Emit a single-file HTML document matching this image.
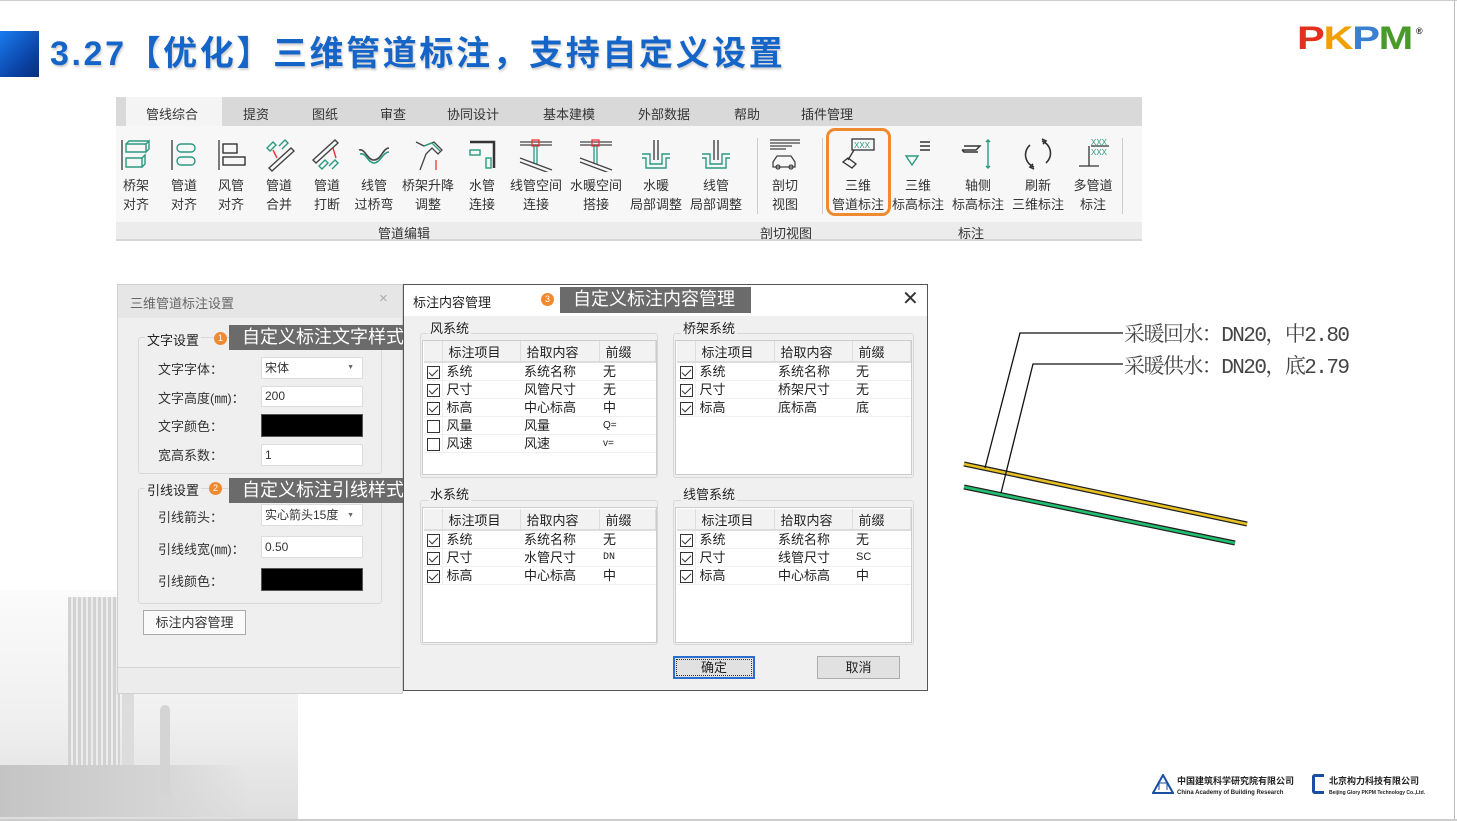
<!DOCTYPE html>
<html><head><meta charset="utf-8"><style>
*{margin:0;padding:0;box-sizing:border-box}
body{width:1457px;height:821px;background:#fff;position:relative;overflow:hidden;font-family:"Liberation Sans","Noto Sans CJK SC",sans-serif;color:#222}
.a{position:absolute}
.t{font-size:13px;white-space:nowrap}
.tab{position:absolute;top:104px;font-size:13px;color:#333}
.btn{position:absolute;top:136px;width:60px;margin-left:-30px;text-align:center;font-size:13px;line-height:19px;color:#333}
.btn svg{display:block;margin:0 auto 4px;width:36px;height:36px}
.sep{position:absolute;top:138px;width:1px;height:76px;background:#ccc}
.lab{position:absolute;font-size:13px;color:#333}
.inp{position:absolute;left:261px;width:102px;background:#fff;border:1px solid #ddd;font-size:12px;padding-left:3px;color:#333}
.blk{position:absolute;left:261px;width:102px;background:#000;border:1px solid #555}
.dark{position:absolute;background:#6b6b6b;color:#fff;font-size:18px;padding-left:13px;line-height:25px;white-space:nowrap}
.circ{position:absolute;width:13px;height:13px;border-radius:50%;background:#f08a30;color:#fff;font-size:9px;text-align:center;line-height:13px}
.gb{position:absolute;border:1px solid #d8d8d8;border-radius:3px}
.gl{position:absolute;font-size:13px;background:#f0f0f0;padding:0 2px}
table{position:absolute;border-collapse:collapse;background:#fff;font-size:13px;table-layout:fixed}
td{height:18px;border-bottom:1px solid #f0f0f0;padding:0 0 0 4px;white-space:nowrap;line-height:17px}
th{height:21px;background:#f2f2f2;border-bottom:2px solid #ddd;border-right:1px solid #ddd;font-weight:normal;text-align:left;padding-left:6px;font-size:13px}
td.c{padding:0 0 0 3px;border-right:1px solid #eee}
.cb{display:inline-block;width:13px;height:13px;border:1px solid #333;vertical-align:middle;position:relative}
.cb.k::after{content:"";position:absolute;left:3px;top:0px;width:4px;height:8px;border:solid #333;border-width:0 1.5px 1.5px 0;transform:rotate(45deg)}
.tw{position:absolute;border:1px solid #ccc;background:#fff}
</style></head><body>
<div class="a" style="left:0;top:0;width:1457px;height:1px;background:#ccc"></div>
<div class="a" style="left:1454px;top:0;width:1px;height:821px;background:#bbb"></div>
<div class="a" style="left:0;top:819px;width:1457px;height:2px;background:#ccc"></div>

<!-- building bg -->
<div class="a" style="left:0;top:590px;width:298px;height:229px;background:linear-gradient(180deg,#fbfbfb,#f0f0f0 55%,#dedede)"></div>
<div class="a" style="left:68px;top:597px;width:52px;height:190px;background:repeating-linear-gradient(90deg,#d2d2d2 0 3px,#ececec 3px 5px)"></div>
<div class="a" style="left:122px;top:690px;width:12px;height:100px;background:#dcdcdc"></div>
<div class="a" style="left:160px;top:705px;width:10px;height:90px;background:#d4d4d4;border-radius:5px 5px 0 0"></div>
<div class="a" style="left:0;top:765px;width:250px;height:52px;background:linear-gradient(90deg,#c4c4c4,#d4d4d4 60%,rgba(240,240,240,0))"></div>

<!-- title -->
<div class="a" style="left:0;top:31px;width:39px;height:46px;background:linear-gradient(135deg,#1a7cf0,#0a3fa0 70%,#082f7a)"></div>
<div class="a" style="left:50px;top:31px;font-size:34px;font-weight:bold;color:#1565c8;white-space:nowrap;line-height:46px;letter-spacing:2.6px;text-shadow:1px 2px 2px rgba(0,0,0,.2)">3.27【优化】三维管道标注，支持自定义设置</div>

<!-- PKPM -->
<div class="a" style="left:1297px;top:22px;font-size:32px;font-weight:900;letter-spacing:-1px;line-height:32px;transform:scaleX(1.3);transform-origin:left top">
<span style="color:#e0301e">P</span><span style="color:#f0a000">K</span><span style="color:#3b7fd0">P</span><span style="color:#4a9a2a">M</span></div>
<div class="a" style="left:1416px;top:26px;font-size:9px;font-weight:bold">®</div>

<!-- ribbon -->
<div class="a" style="left:116px;top:97px;width:1026px;height:29px;background:#d9d9d9"></div>
<div class="a" style="left:126px;top:97px;width:96px;height:29px;background:#f4f4f4"></div>
<div class="tab" style="left:146px">管线综合</div>
<div class="tab" style="left:243px">提资</div>
<div class="tab" style="left:312px">图纸</div>
<div class="tab" style="left:380px">审查</div>
<div class="tab" style="left:447px">协同设计</div>
<div class="tab" style="left:543px">基本建模</div>
<div class="tab" style="left:638px">外部数据</div>
<div class="tab" style="left:734px">帮助</div>
<div class="tab" style="left:801px">插件管理</div>
<div class="a" style="left:116px;top:126px;width:1026px;height:96px;background:#f7f7f7"></div>
<div class="a" style="left:116px;top:222px;width:1026px;height:19px;background:#ececec;border-bottom:2px solid #d6d6d6"></div>
<div class="lab" style="left:378px;top:223px">管道编辑</div>
<div class="lab" style="left:760px;top:223px">剖切视图</div>
<div class="lab" style="left:958px;top:223px">标注</div>
<div class="sep" style="left:757px"></div><div class="sep" style="left:822px"></div><div class="sep" style="left:1122px"></div>

<div class="btn" style="left:136px"><svg viewBox="0 0 36 36" fill="none" stroke-width="1.4"><path d="M4 4v30" stroke="#444"/><path d="M8 8h20v8H8zM28 8l3-3v8l-3 3M8 8l3-3h20" stroke="#2a9a80"/><path d="M8 22h16v9H8zM24 22l3-3v9l-3 3" stroke="#2a9a80"/></svg>桥架<br>对齐</div>
<div class="btn" style="left:184px"><svg viewBox="0 0 36 36" fill="none" stroke-width="1.4"><path d="M6 4v30" stroke="#444"/><rect x="11" y="8" width="18" height="8" rx="4" stroke="#2a9a80"/><rect x="11" y="21" width="18" height="8" rx="4" stroke="#2a9a80"/></svg>管道<br>对齐</div>
<div class="btn" style="left:231px"><svg viewBox="0 0 36 36" fill="none" stroke-width="1.4"><path d="M6 4v30" stroke="#444"/><rect x="10" y="8" width="14" height="9" stroke="#333"/><rect x="10" y="21" width="22" height="8" stroke="#333"/></svg>风管<br>对齐</div>
<div class="btn" style="left:279px"><svg viewBox="0 0 36 36" fill="none" stroke-width="1.4"><path d="M6 12l6-6 3 3-6 6zM18 10l6-6 3 3-6 6" stroke="#2a9a80"/><path d="M8 32l22-20 3 3-22 20z" stroke="#444"/><path d="M12 14l4 8" stroke="#e33"/></svg>管道<br>合并</div>
<div class="btn" style="left:327px"><svg viewBox="0 0 36 36" fill="none" stroke-width="1.4"><path d="M4 24l22-20 3 3-22 20z" stroke="#444"/><path d="M10 30l6-6 3 3-6 6zM20 30l6-6 3 3-6 6" stroke="#2a9a80"/><path d="M24 12l3 10" stroke="#e33"/></svg>管道<br>打断</div>
<div class="btn" style="left:374px"><svg viewBox="0 0 36 36" fill="none" stroke-width="1.6"><path d="M3 14c6-2 8 10 15 10s9-12 15-12" stroke="#444"/><path d="M4 18c6-2 8 9 14 9s9-11 15-11" stroke="#2a9a80"/></svg>线管<br>过桥弯</div>
<div class="btn" style="left:428px"><svg viewBox="0 0 36 36" fill="none" stroke-width="1.3"><path d="M6 6l8 4 10-4 8 8-4 4-6-6-6 6-6 16" stroke="#444"/><path d="M14 10l8-3 8 8" stroke="#2a9a80"/><path d="M26 34v-10" stroke="#e33"/></svg>桥架升降<br>调整</div>
<div class="btn" style="left:482px"><svg viewBox="0 0 36 36" fill="none" stroke-width="1.4"><path d="M6 6h24v26" stroke="#333" stroke-width="2.5"/><rect x="6" y="14" width="10" height="5" stroke="#2a9a80"/><rect x="22" y="22" width="5" height="10" stroke="#2a9a80"/></svg>水管<br>连接</div>
<div class="btn" style="left:536px"><svg viewBox="0 0 36 36" fill="none" stroke-width="1.3"><path d="M2 6h32M2 9h32" stroke="#444"/><rect x="14" y="4" width="7" height="6" stroke="#e33"/><path d="M16 10v18M19 10v18" stroke="#2a9a80"/><path d="M2 22l32 12M2 26l32 12" stroke="#444"/></svg>线管空间<br>连接</div>
<div class="btn" style="left:596px"><svg viewBox="0 0 36 36" fill="none" stroke-width="1.3"><path d="M2 6h32M2 9h32" stroke="#444"/><rect x="14" y="4" width="7" height="6" stroke="#e33"/><path d="M16 10v18M19 10v18" stroke="#2a9a80"/><path d="M2 22l32 12M2 26l32 12" stroke="#444"/></svg>水暖空间<br>搭接</div>
<div class="btn" style="left:656px"><svg viewBox="0 0 36 36" fill="none" stroke-width="1.4"><path d="M16 4v20M20 4v20" stroke="#444"/><path d="M4 18h8v10h12V18h8M4 22h4v10h20V22h4" stroke="#2a9a80"/></svg>水暖<br>局部调整</div>
<div class="btn" style="left:716px"><svg viewBox="0 0 36 36" fill="none" stroke-width="1.4"><path d="M16 4v20M20 4v20" stroke="#444"/><path d="M4 18h8v10h12V18h8M4 22h4v10h20V22h4" stroke="#2a9a80"/></svg>线管<br>局部调整</div>
<div class="btn" style="left:785px"><svg viewBox="0 0 36 36" fill="none" stroke-width="1.3"><path d="M3 4h30M3 7h30M3 10h22M3 13h16" stroke="#444"/><path d="M6 26l4-6h14l4 6v5H6z" stroke="#444"/><circle cx="11" cy="31" r="2" stroke="#444"/><circle cx="24" cy="31" r="2" stroke="#444"/></svg>剖切<br>视图</div>
<div class="btn" style="left:858px"><svg viewBox="0 0 36 36" fill="none" stroke-width="1.3"><rect x="12" y="3" width="22" height="11" stroke="#333"/><text x="14" y="12" font-size="8" fill="#2a9a80" stroke="none" font-family="Liberation Sans">XXX</text><path d="M14 14l-6 10" stroke="#333"/><path d="M3 26l5-4 8 6-4 4z" stroke="#333"/></svg>三维<br>管道标注</div>
<div class="btn" style="left:918px"><svg viewBox="0 0 36 36" fill="none" stroke-width="1.4"><path d="M20 6h10M20 10h10M20 14h10" stroke="#333"/><path d="M6 20h12l-6 9z" stroke="#2a9a80"/></svg>三维<br>标高标注</div>
<div class="btn" style="left:978px"><svg viewBox="0 0 36 36" fill="none" stroke-width="1.4"><path d="M4 10h16l-4 4H2M2 14l2 2h14" stroke="#333"/><path d="M28 4v28M26 6l2-2 2 2M26 30l2 2 2-2" stroke="#2a9a80"/></svg>轴侧<br>标高标注</div>
<div class="btn" style="left:1038px"><svg viewBox="0 0 36 36" fill="none" stroke-width="1.6"><path d="M22 5a13 13 0 0 1 4 22M14 31a13 13 0 0 1-4-22" stroke="#333"/><path d="M22 3l4 2-3 3M14 33l-4-2 3-3" stroke="#333"/></svg>刷新<br>三维标注</div>
<div class="btn" style="left:1093px"><svg viewBox="0 0 36 36" fill="none" stroke-width="1.3"><text x="16" y="9" font-size="8" fill="#2a9a80" font-family="Liberation Sans">XXX</text><text x="16" y="19" font-size="8" fill="#2a9a80" font-family="Liberation Sans">XXX</text><path d="M16 10h18M14 10v20M4 30h20" stroke="#333"/></svg>多管道<br>标注</div>
<div class="a" style="left:826px;top:128px;width:65px;height:88px;border:3px solid #f08a30;border-radius:9px"></div>

<!-- left dialog -->
<div class="a" style="left:117px;top:284px;width:286px;height:410px;background:#ececec;border:1px solid #d0d0d0"></div>
<div class="a" style="left:118px;top:285px;width:284px;height:33px;background:#e6e6e6"></div>
<div class="t a" style="left:130px;top:293px;color:#666">三维管道标注设置</div>
<div class="a" style="left:379px;top:290px;color:#aaa;font-size:15px">×</div>
<div class="a" style="left:118px;top:318px;width:282px;height:350px;background:#efefef;border-bottom:1px solid #d5d5d5"></div>
<div class="gb" style="left:138px;top:337px;width:244px;height:137px"></div>
<div class="gl" style="left:145px;top:330px;background:#efefef">文字设置</div>
<div class="circ" style="left:214px;top:332px">1</div>
<div class="dark" style="left:229px;top:325px;width:197px">自定义标注文字样式</div>
<div class="lab" style="left:158px;top:359px">文字字体：</div>
<div class="lab" style="left:158px;top:388px">文字高度(㎜)：</div>
<div class="lab" style="left:158px;top:416px">文字颜色：</div>
<div class="lab" style="left:158px;top:445px">宽高系数：</div>
<div class="inp" style="top:357px;height:22px;line-height:20px">宋体<span style="position:absolute;right:8px;font-size:7px;color:#666">▼</span></div>
<div class="inp" style="top:386px;height:21px;line-height:19px">200</div>
<div class="blk" style="top:414px;height:23px"></div>
<div class="inp" style="top:444px;height:22px;line-height:21px">1</div>
<div class="gb" style="left:138px;top:488px;width:244px;height:116px"></div>
<div class="gl" style="left:145px;top:480px;background:#efefef">引线设置</div>
<div class="circ" style="left:209px;top:482px">2</div>
<div class="dark" style="left:229px;top:478px;width:194px">自定义标注引线样式</div>
<div class="lab" style="left:158px;top:507px">引线箭头：</div>
<div class="lab" style="left:158px;top:539px">引线线宽(㎜)：</div>
<div class="lab" style="left:158px;top:571px">引线颜色：</div>
<div class="inp" style="top:504px;height:22px;line-height:21px">实心箭头15度<span style="position:absolute;right:8px;font-size:7px;color:#666">▼</span></div>
<div class="inp" style="top:536px;height:22px;line-height:21px">0.50</div>
<div class="blk" style="top:568px;height:23px"></div>
<div class="a t" style="left:143px;top:610px;width:103px;height:25px;border:1px solid #aaa;background:#fafafa;text-align:center;line-height:23px;color:#333">标注内容管理</div>

<!-- right dialog -->
<div class="a" style="left:403px;top:284px;width:525px;height:407px;background:#f0f0f0;border:1px solid #555"></div>
<div class="a" style="left:404px;top:285px;width:523px;height:31px;background:#fff"></div>
<div class="t a" style="left:413px;top:292px">标注内容管理</div>
<div class="circ" style="left:541px;top:293px">3</div>
<div class="dark" style="left:560px;top:287px;width:191px;height:26px">自定义标注内容管理</div>
<div class="a" style="left:902px;top:288px;font-size:20px;color:#333;line-height:22px">✕</div>

<div class="gb" style="left:420px;top:333px;width:238px;height:145px"></div>
<div class="gl" style="left:428px;top:318px">风系统</div>
<div class="gb" style="left:673px;top:333px;width:241px;height:145px"></div>
<div class="gl" style="left:681px;top:318px">桥架系统</div>
<div class="gb" style="left:420px;top:500px;width:238px;height:145px"></div>
<div class="gl" style="left:428px;top:484px">水系统</div>
<div class="gb" style="left:673px;top:500px;width:241px;height:145px"></div>
<div class="gl" style="left:681px;top:484px">线管系统</div>

<div class="tw" style="left:422px;top:340px;width:235px;height:135px"></div>
<div class="tw" style="left:675px;top:340px;width:237px;height:135px"></div>
<div class="tw" style="left:422px;top:507px;width:235px;height:136px"></div>
<div class="tw" style="left:675px;top:507px;width:237px;height:136px"></div>

<table style="left:424px;top:341px;width:232px"><colgroup><col style="width:18px"><col style="width:78px"><col style="width:79px"><col></colgroup>
<tr><th></th><th>标注项目</th><th>拾取内容</th><th>前缀</th></tr>
<tr><td class="c"><span class="cb k"></span></td><td>系统</td><td>系统名称</td><td>无</td></tr>
<tr><td class="c"><span class="cb k"></span></td><td>尺寸</td><td>风管尺寸</td><td>无</td></tr>
<tr><td class="c"><span class="cb k"></span></td><td>标高</td><td>中心标高</td><td>中</td></tr>
<tr><td class="c"><span class="cb"></span></td><td>风量</td><td>风量</td><td style="font-size:10px">Q=</td></tr>
<tr><td class="c"><span class="cb"></span></td><td>风速</td><td>风速</td><td style="font-size:10px">v=</td></tr>
</table>
<table style="left:677px;top:341px;width:234px"><colgroup><col style="width:18px"><col style="width:79px"><col style="width:78px"><col></colgroup>
<tr><th></th><th>标注项目</th><th>拾取内容</th><th>前缀</th></tr>
<tr><td class="c"><span class="cb k"></span></td><td>系统</td><td>系统名称</td><td>无</td></tr>
<tr><td class="c"><span class="cb k"></span></td><td>尺寸</td><td>桥架尺寸</td><td>无</td></tr>
<tr><td class="c"><span class="cb k"></span></td><td>标高</td><td>底标高</td><td>底</td></tr>
</table>
<table style="left:424px;top:509px;width:232px"><colgroup><col style="width:18px"><col style="width:78px"><col style="width:79px"><col></colgroup>
<tr><th></th><th>标注项目</th><th>拾取内容</th><th>前缀</th></tr>
<tr><td class="c"><span class="cb k"></span></td><td>系统</td><td>系统名称</td><td>无</td></tr>
<tr><td class="c"><span class="cb k"></span></td><td>尺寸</td><td>水管尺寸</td><td style="font-size:10px;font-family:'Liberation Mono',monospace">DN</td></tr>
<tr><td class="c"><span class="cb k"></span></td><td>标高</td><td>中心标高</td><td>中</td></tr>
</table>
<table style="left:677px;top:509px;width:234px"><colgroup><col style="width:18px"><col style="width:79px"><col style="width:78px"><col></colgroup>
<tr><th></th><th>标注项目</th><th>拾取内容</th><th>前缀</th></tr>
<tr><td class="c"><span class="cb k"></span></td><td>系统</td><td>系统名称</td><td>无</td></tr>
<tr><td class="c"><span class="cb k"></span></td><td>尺寸</td><td>线管尺寸</td><td style="font-size:11px">SC</td></tr>
<tr><td class="c"><span class="cb k"></span></td><td>标高</td><td>中心标高</td><td>中</td></tr>
</table>

<div class="a t" style="left:673px;top:656px;width:82px;height:23px;border:2px solid #2a6fd0;background:#e1e1e1;text-align:center;line-height:19px;outline:1px dotted #333;outline-offset:-4px">确定</div>
<div class="a t" style="left:817px;top:656px;width:83px;height:23px;border:1px solid #adadad;background:#e1e1e1;text-align:center;line-height:21px">取消</div>

<!-- drawing -->
<svg class="a" style="left:0;top:0" width="1457" height="821">
<path d="M964 464L1247 524" stroke="#222" stroke-width="5"/><path d="M964 464L1247 524" stroke="#e8c020" stroke-width="2.5"/>
<path d="M964 487L1235 543" stroke="#222" stroke-width="5"/><path d="M964 487L1235 543" stroke="#20c070" stroke-width="2.5"/>
<path d="M1123 333H1020L985 468M1123 364H1033L1001 493" stroke="#111" stroke-width="1.3" fill="none"/>
<text x="1124" y="341" font-size="21" fill="#444" font-family="Liberation Mono,'Noto Serif CJK SC',monospace" textLength="226">采暖回水：DN20，中2.80</text>
<text x="1124" y="373" font-size="21" fill="#444" font-family="Liberation Mono,'Noto Serif CJK SC',monospace" textLength="226">采暖供水：DN20，底2.79</text>
</svg>

<!-- bottom logos -->
<svg class="a" style="left:1152px;top:774px" width="22" height="20"><path d="M11 1L21 19H1z" fill="none" stroke="#1a4fa0" stroke-width="2"/><path d="M7 16V9h8v7" stroke="#1a4fa0" fill="none"/></svg>
<div class="a" style="left:1177px;top:776px;font-size:9px;font-weight:bold;color:#222;white-space:nowrap;line-height:10px">中国建筑科学研究院有限公司<br><span style="font-size:6px">China Academy of Building Research</span></div>
<div class="a" style="left:1312px;top:774px;width:12px;height:20px;border:3px solid #1a4fa0;border-right:none;border-radius:3px 0 0 3px"></div>
<div class="a" style="left:1329px;top:776px;font-size:9px;font-weight:bold;color:#222;white-space:nowrap;line-height:10px">北京构力科技有限公司<br><span style="font-size:5px">Beijing Glory PKPM Technology Co.,Ltd.</span></div>
</body></html>
